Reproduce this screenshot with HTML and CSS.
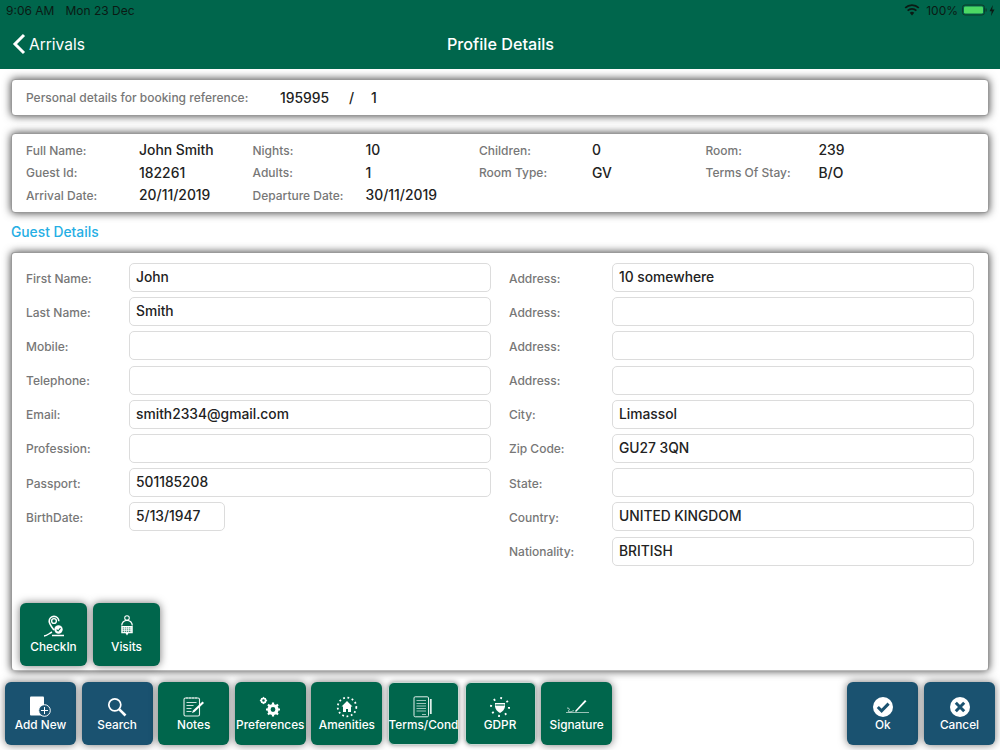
FILE: index.html
```html
<!DOCTYPE html>
<html lang="en">
<head>
<meta charset="utf-8">
<title>Profile Details</title>
<link rel="stylesheet" href="styles.css">
</head>
<body>
<div class="page">
  <header class="header">
    <div class="status">
      <div class="status-left"><span>9:06 AM</span><span>Mon 23 Dec</span></div>
      <div class="status-right">
        <svg class="wifi" width="16" height="12" viewBox="0 0 16 12"><path d="M8 11.5 5.7 8.8a3.4 3.4 0 0 1 4.6 0Z" fill="#0b1a14"/><path d="M3.6 6.6a6.3 6.3 0 0 1 8.8 0M1.2 3.9a9.8 9.8 0 0 1 13.6 0" fill="none" stroke="#0b1a14" stroke-width="1.7"/></svg>
        <span>100%</span>
        <svg width="25" height="12" viewBox="0 0 25 12"><rect x=".5" y="1" width="22" height="10" rx="2.5" fill="none" stroke="#0d3a2a"/><rect x="2" y="2.5" width="19" height="7" rx="1.2" fill="#4cd964"/><rect x="23.500" y="4.5" width="1.2" height="3" fill="#0d3a2a"/></svg>
        <svg width="6" height="11" viewBox="0 0 6 11"><path d="M3.8 0 .5 6.2h2.2L2 11l3.500-6.500H3.200Z" fill="#0b1a14"/></svg>
      </div>
    </div>
    <div class="nav">
      <div class="back">
        <svg width="14" height="22" viewBox="0 0 14 22"><path d="M12 2 3 11l9 9" fill="none" stroke="#fff" stroke-width="3"/></svg>
        <span>Arrivals</span>
      </div>
      <h1 class="title">Profile Details</h1>
    </div>
  </header>

  <main class="content">
    <section class="panel ref-panel">
      <span class="label ref-label">Personal details for booking reference:</span>
      <span class="value ref-num">195995</span>
      <span class="value ref-slash">/</span>
      <span class="value">1</span>
    </section>

    <section class="panel info-panel">
      <span class="label">Full Name:</span><span class="value">John Smith</span>
      <span class="label">Nights:</span><span class="value">10</span>
      <span class="label">Children:</span><span class="value">0</span>
      <span class="label">Room:</span><span class="value">239</span>
      <span class="label">Guest Id:</span><span class="value">182261</span>
      <span class="label">Adults:</span><span class="value">1</span>
      <span class="label">Room Type:</span><span class="value">GV</span>
      <span class="label">Terms Of Stay:</span><span class="value">B/O</span>
      <span class="label">Arrival Date:</span><span class="value">20/11/2019</span>
      <span class="label">Departure Date:</span><span class="value">30/11/2019</span>
    </section>

    <h2 class="section-title">Guest Details</h2>

    <section class="panel guest-panel">
      <div class="form">
        <div class="form-col left-col">
          <div class="field"><span class="label">First Name:</span><div class="input">John</div></div>
          <div class="field"><span class="label">Last Name:</span><div class="input">Smith</div></div>
          <div class="field"><span class="label">Mobile:</span><div class="input"></div></div>
          <div class="field"><span class="label">Telephone:</span><div class="input"></div></div>
          <div class="field"><span class="label">Email:</span><div class="input">smith2334@gmail.com</div></div>
          <div class="field"><span class="label">Profession:</span><div class="input"></div></div>
          <div class="field"><span class="label">Passport:</span><div class="input">501185208</div></div>
          <div class="field"><span class="label">BirthDate:</span><div class="input input-short">5/13/1947</div></div>
        </div>
        <div class="form-col right-col">
          <div class="field"><span class="label">Address:</span><div class="input">10 somewhere</div></div>
          <div class="field"><span class="label">Address:</span><div class="input"></div></div>
          <div class="field"><span class="label">Address:</span><div class="input"></div></div>
          <div class="field"><span class="label">Address:</span><div class="input"></div></div>
          <div class="field"><span class="label">City:</span><div class="input">Limassol</div></div>
          <div class="field"><span class="label">Zip Code:</span><div class="input">GU27 3QN</div></div>
          <div class="field"><span class="label">State:</span><div class="input"></div></div>
          <div class="field"><span class="label">Country:</span><div class="input">UNITED KINGDOM</div></div>
          <div class="field"><span class="label">Nationality:</span><div class="input">BRITISH</div></div>
        </div>
      </div>
      <div class="panel-actions">
        <button class="tile green small">
          <svg width="24" height="22" viewBox="0 0 24 22" fill="none" stroke="#fff"><path d="M12 15C9 11 7.2 9 7.2 6.200a4.800 4.800 0 0 1 9.600 0" stroke-width="1.600"/><circle cx="12" cy="6" r="2.400" stroke-width="1.400"/><path d="M2 21c3-.2 5-2.500 8-4M10 20.500h12" stroke-width="1.400"/><circle cx="16.500" cy="14.500" r="4.200" fill="#fff" stroke="none"/><path d="m14.600 14.600 1.500 1.400 2.400-2.800" stroke="#00664c" stroke-width="1.100"/></svg>
          <span>CheckIn</span>
        </button>
        <button class="tile green small">
          <svg width="16" height="23" viewBox="0 0 16 23" fill="none" stroke="#fff"><circle cx="8" cy="3.200" r="2.400" stroke-width="1.100"/><path d="M2.500 11a5.500 5.500 0 0 1 11 0" stroke-width="1.300"/><path d="M2 11.500h12v7.500H9.500L8 21.500 6.500 19H2Z" fill="#fff" stroke="none"/><path d="M3.500 13.500h9M3.500 15.500h9M3.500 17.300h9" stroke="#00664c" stroke-width=".8" stroke-dasharray="1.500 .7"/></svg>
          <span>Visits</span>
        </button>
      </div>
    </section>
  </main>

  <footer class="toolbar">
    <div class="tool-group">
      <button class="tile blue">
        <svg width="24" height="22" viewBox="0 0 24 22"><rect x="1" y="0.500" width="14" height="19" rx="1" fill="#fff"/><circle cx="15.500" cy="14.500" r="5.800" fill="#1a5270" stroke="#fff" stroke-width="1"/><path d="M15.500 11v7M12 14.500h7" stroke="#fff" stroke-width="1"/></svg>
        <span>Add New</span>
      </button>
      <button class="tile blue">
        <svg width="20" height="20" viewBox="0 0 20 20" fill="none" stroke="#fff"><circle cx="7.800" cy="7.800" r="6" stroke-width="1.700"/><path d="m12.300 12.300 6.200 6.200" stroke-width="2.600"/></svg>
        <span>Search</span>
      </button>
      <button class="tile green">
        <svg width="22" height="21" viewBox="0 0 22 21" fill="none" stroke="#e4efeb"><rect x="1" y="1.500" width="15.500" height="18" rx="1.500" stroke-width="1.100"/><path d="M3.500 6h10M3.500 9h7M3.500 12h5M3.500 15h5M4 .5v2M7 .5v2M10 .5v2M13 .5v2" stroke-width=".9"/><path d="m9 16.500 1-2.500L19.500 5l1.500 1.500-9.500 9Z" fill="#fff" stroke="none"/></svg>
        <span>Notes</span>
      </button>
      <button class="tile green">
        <svg width="22" height="21" viewBox="0 0 22 21"><circle cx="4.500" cy="4" r="2.200" fill="none" stroke="#fff" stroke-width="1.800"/><path d="M4.500.4v1M4.500 6.600v1M.9 4h1M7.100 4h1M2 1.500l.7.700M6.300 5.800l.7.700M2 6.500l.7-.7M6.300 2.200l.7-.7" stroke="#fff" stroke-width="1"/><circle cx="14" cy="13" r="4" fill="none" stroke="#fff" stroke-width="3.200"/><path d="M14 6v2.500M14 17.500V20M7 13h2.500M18.500 13H21M9 8l1.800 1.800M17.200 16.200 19 18M9 18l1.800-1.800M17.200 9.800 19 8" stroke="#fff" stroke-width="2.200"/></svg>
        <span>Preferences</span>
      </button>
      <button class="tile green">
        <svg width="22" height="22" viewBox="0 0 22 22" fill="none"><circle cx="11" cy="11" r="9.300" stroke="#fff" stroke-width="1.800" stroke-dasharray="1.800 2.600"/><path d="M11 5 5.500 10.500H7v5.500h3v-3h2v3h3v-5.500h1.500Z" fill="#fff"/></svg>
        <span>Amenities</span>
      </button>
      <button class="tile green outlined">
        <svg width="20" height="22" viewBox="0 0 20 22" fill="none" stroke="#dfeee9"><rect x="1" y=".8" width="14.500" height="20" rx="1.200" stroke-width="1"/><path d="M3.500 4.500h9.500M3.500 7.500h9.500M3.500 10h9.500M3.500 12.500h9.500M3.500 15h9.500M9 18.500h4" stroke-width=".7"/><path d="M17.800 3v15" stroke-width="1.800"/></svg>
        <span>Terms/Cond</span>
      </button>
      <button class="tile green outlined">
        <svg width="22" height="20" viewBox="0 0 22 20"><circle cx="11" cy="10" r="9" fill="none" stroke="#fff" stroke-width="2" stroke-dasharray="1.800 5.270"/><path d="M6 6h10v3.500c0 2.500-2.500 5-5 6.500-2.500-1.500-5-4-5-6.500Z" fill="#fff"/><path d="M6.500 8h9" stroke="#00664c" stroke-width="1.200"/></svg>
        <span>GDPR</span>
      </button>
      <button class="tile green">
        <svg width="24" height="20" viewBox="0 0 24 20" fill="none" stroke="#fff"><path d="m10 14 10-11 1.500 1.300L11 15Z" fill="#fff" stroke="none"/><path d="M1 15.500h23" stroke-width=".6"/><path d="M2 11c2 0 3 1 2 2s-1 2 1 2 3-2 4-1" stroke-width=".7"/></svg>
        <span>Signature</span>
      </button>
    </div>
    <div class="tool-group">
      <button class="tile blue">
        <svg width="22" height="22" viewBox="0 0 22 22"><circle cx="11" cy="11" r="10" fill="#fff"/><path d="m5.800 11 3.800 3.800 7-7.200" fill="none" stroke="#1a5270" stroke-width="3"/></svg>
        <span>Ok</span>
      </button>
      <button class="tile blue">
        <svg width="22" height="22" viewBox="0 0 22 22"><circle cx="11" cy="11" r="10" fill="#fff"/><path d="m6.800 6.800 8.400 8.400M15.200 6.800l-8.400 8.400" fill="none" stroke="#1a5270" stroke-width="3"/></svg>
        <span>Cancel</span>
      </button>
    </div>
  </footer>
</div>
</body>
</html>
```
FILE: styles.css
```css
* { box-sizing: border-box; }
html, body { margin: 0; height: 100%; }
body {
  font-family: Inter, "Liberation Sans", sans-serif;
  background: #fff;
  color: #222;
}
.page {
  width: 1000px;
  height: 750px;
  display: flex;
  flex-direction: column;
  overflow: hidden;
}

/* Header */
.header {
  height: 69px;
  flex: none;
  background: #00664c;
  padding: 0 5px 0 6px;
}
.status {
  height: 20px;
  display: flex;
  justify-content: space-between;
  align-items: center;
  font-size: 12px;
  color: #0b1a14;
}
.status-left { display: flex; gap: 11px; }
.status-right { display: flex; align-items: center; gap: 2px; }
.status-right span { margin: 0 2px 0 4px; color: #0b1a14; }
.nav {
  position: relative;
  height: 49px;
  display: flex;
  align-items: center;
  justify-content: center;
}
.back {
  position: absolute;
  left: 6px;
  top: 4px;
  display: flex;
  align-items: center;
  gap: 3px;
  font-size: 15.500px;
  color: #fff;
  height: 40px;
}
.title {
  margin: 0;
  height: 49px;
  line-height: 48px;
  font-size: 16.200px;
  font-weight: 500;
  color: #fff;
}

/* Content */
.content {
  flex: none;
  height: 602px;
  padding: 10px 11px 0;
  display: flex;
  flex-direction: column;
}
.panel {
  background: #fff;
  border-radius: 4px;
  border: 1px solid #9a9a9a;
  box-shadow: 0 0 8px rgba(0, 0, 0, .75);
}
.label {
  font-size: 12px;
  font-weight: 500;
  color: #777;
  white-space: nowrap;
}
.value {
  font-size: 13.900px;
  font-weight: 450;
  color: #222;
  white-space: nowrap;
}
.ref-panel {
  height: 37px;
  display: flex;
  align-items: center;
  padding-left: 14px;
}
.ref-label { width: 254px; }
.ref-num { width: 69px; }
.ref-slash { width: 22px; }

.info-panel {
  margin-top: 17px;
  height: 80px;
  padding: 5px 14px 0;
  display: grid;
  grid-template-columns: repeat(4, 113px 113.500px);
  grid-auto-rows: 22.500px;
  align-items: center;
}

.section-title {
  margin: 0;
  height: 39px;
  line-height: 39px;
  font-size: 13.800px;
  font-weight: 500;
  color: #25aee4;
}

.guest-panel {
  flex: 1;
  padding: 10px 14px 4px 8px;
  display: flex;
  flex-direction: column;
  justify-content: space-between;
  border-bottom-color: #bbb;
}
.form { display: flex; }
.form-col { display: flex; flex-direction: column; gap: 5.200px; }
.left-col { width: 489px; }
.right-col { width: 465px; }
.field { display: flex; align-items: center; height: 29px; }
.field .label { padding-top: 1px; width: 103px; }
.left-col .field { padding-left: 6px; }
.field .input { width: 362px; }
.input {
  height: 29px;
  line-height: 27px;
  border: 1px solid #dcdcdc;
  border-radius: 5px;
  padding: 0 6px;
  font-size: 13.800px;
  font-weight: 450;
  color: #222;
  background: #fff;
}
.field .input-short { width: 96px; }
.panel-actions { display: flex; gap: 6px; }

/* Tiles */
.tile {
  width: 71px;
  height: 63px;
  padding: 14px 0 0;
  border: 0;
  border-radius: 6px;
  color: #fff;
  font-family: inherit;
  font-size: 11.800px;
  font-weight: 500;
  display: flex;
  flex-direction: column;
  align-items: center;
  justify-content: flex-start;
  box-shadow: 0 0 8px rgba(0, 0, 0, .55);
  white-space: nowrap;
}
.tile svg { height: 22px; flex: none; margin-bottom: 0; }
.tile span { line-height: 14px; }
.tile.small { width: 67px; padding-top: 12px; }
.tile.small svg { margin-bottom: 3px; }
.green { background: #00664c; }
.blue { background: #1a5270; }
.outlined { border: 1px solid #c9d8d3; padding-top: 13px; box-shadow: 0 0 5px rgba(0,0,0,.45); }

.toolbar {
  flex: none;
  height: 79px;
  padding: 11px 5px 0;
  display: flex;
  justify-content: space-between;
}
.tool-group { display: flex; gap: 5.600px; }
```
